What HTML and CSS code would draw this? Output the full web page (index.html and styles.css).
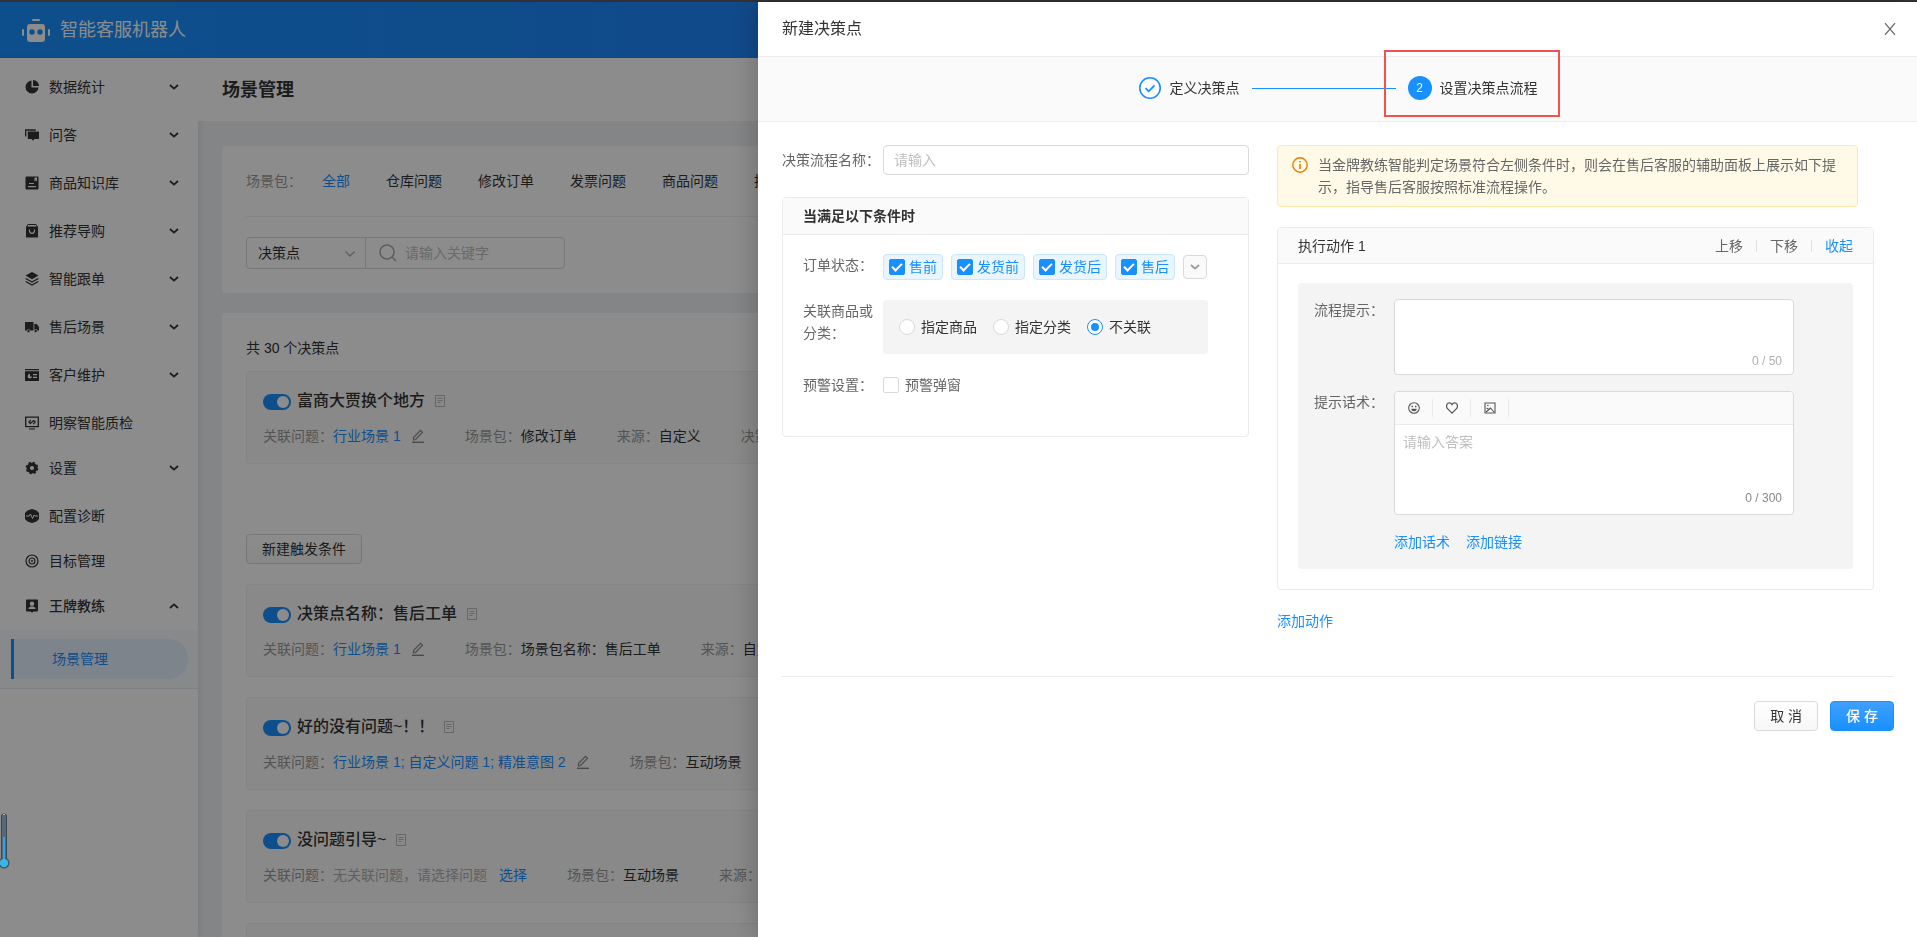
FILE: index.html
```html
<!DOCTYPE html>
<html lang="zh-CN">
<head>
<meta charset="utf-8">
<title>智能客服机器人</title>
<link rel="stylesheet" href="styles.css">
</head>
<body>
<svg class="sprite" aria-hidden="true">
  <symbol id="chevron" viewBox="0 0 10 6"><path d="M1 1l4 3.6L9 1" fill="none" stroke="currentColor" stroke-width="1.8"/></symbol>
  <symbol id="doc" viewBox="0 0 10 12"><path d="M.5.5h9v11h-9z" fill="none" stroke="currentColor"/><path d="M2.5 3.5h5M2.5 5.5h5M2.5 7.5h3" stroke="currentColor"/></symbol>
  <symbol id="pencil" viewBox="0 0 12 14"><path d="M1.5 11V8.600L8.500 1.300l2 1.900L3.600 10.500 1.500 11z" fill="none" stroke="currentColor" stroke-width="1.2"/><path d="M0 13.300h12" stroke="currentColor" stroke-width="1.400"/></symbol>
</svg>

<div class="app">
  <header class="topbar">
    <svg class="logo" viewBox="0 0 28 23" aria-hidden="true"><path fill="#fff" d="M11 0h6a1 1 0 010 2h-6a1 1 0 010-2zM8 5h12a3 3 0 013 3v12a3 3 0 01-3 3H8a3 3 0 01-3-3V8a3 3 0 013-3zM1 10a1 1 0 011 1v5a1 1 0 01-2 0v-5a1 1 0 011-1zM27 10a1 1 0 011 1v5a1 1 0 01-2 0v-5a1 1 0 011-1z"/><circle cx="10" cy="13" r="2.700" fill="#1890ff"/><circle cx="18" cy="13" r="2.700" fill="#1890ff"/></svg>
    <span class="brand">智能客服机器人</span>
  </header>

  <div class="workspace">
    <nav class="sidebar" aria-label="主菜单">
      <button type="button" class="menu-item"><svg class="menu-icon" viewBox="0 0 14 14"><path fill="currentColor" d="M6.500.500v7h7A6.500 6.500 0 116.500.500z"/><path fill="currentColor" d="M8 0a6 6 0 016 6H8z"/></svg><span>数据统计</span><svg class="menu-arrow"><use href="#chevron"/></svg></button>
      <button type="button" class="menu-item"><svg class="menu-icon" viewBox="0 0 14 14"><path d="M.700 8.500V2h10" fill="none" stroke="currentColor" stroke-width="1.300"/><path fill="currentColor" d="M2.800 3.500H14v7.500h-4.500l-1.500 1.800L6.500 11H2.800z"/></svg><span>问答</span><svg class="menu-arrow"><use href="#chevron"/></svg></button>
      <button type="button" class="menu-item"><svg class="menu-icon" viewBox="0 0 14 14"><path fill="currentColor" fill-rule="evenodd" d="M1.500.500h11a1 1 0 011 1v11a1 1 0 01-1 1h-11a1 1 0 01-1-1v-11a1 1 0 011-1zM9.500 1.500v4L11 4.300l1 1.200v-4zM4 7v1h5V7zM3 10v1.200h8V10z"/></svg><span>商品知识库</span><svg class="menu-arrow"><use href="#chevron"/></svg></button>
      <button type="button" class="menu-item"><svg class="menu-icon" viewBox="0 0 14 14"><path d="M3 .500h8l1.500 2.500h-11z" fill="none" stroke="currentColor"/><path fill="currentColor" d="M1 3h12v10.500H1z"/><path d="M4.500 5.500v1.300a2.500 2.500 0 005 0V5.500" fill="none" stroke="#fff" stroke-width="1.200"/></svg><span>推荐导购</span><svg class="menu-arrow"><use href="#chevron"/></svg></button>
      <button type="button" class="menu-item"><svg class="menu-icon" viewBox="0 0 14 14"><path fill="currentColor" d="M7 0l6.500 3.600L7 7.200.500 3.600z"/><path d="M.700 6.500L7 10l6.300-3.500M.700 9.500L7 13l6.300-3.500" fill="none" stroke="currentColor" stroke-width="1.300"/></svg><span>智能跟单</span><svg class="menu-arrow"><use href="#chevron"/></svg></button>
      <button type="button" class="menu-item"><svg class="menu-icon" viewBox="0 0 14 14"><path fill="currentColor" d="M0 2h8.500v8.500H0zM9.300 4h2.500L14 7v3.500H9.300z"/><circle cx="3.500" cy="11" r="1.600" fill="currentColor" stroke="#fff" stroke-width=".700"/><circle cx="10.800" cy="11" r="1.600" fill="currentColor" stroke="#fff" stroke-width=".700"/></svg><span>售后场景</span><svg class="menu-arrow"><use href="#chevron"/></svg></button>
      <button type="button" class="menu-item"><svg class="menu-icon" viewBox="0 0 14 14"><path fill="currentColor" fill-rule="evenodd" d="M0 1h14v1.300H0zM0 3.300h14V13H0zM5 6a2.200 2.200 0 102 2.500H5zM8 6v1.200h4V6zM8 8.700v1.200h4V8.700z"/></svg><span>客户维护</span><svg class="menu-arrow"><use href="#chevron"/></svg></button>
      <a href="#" class="menu-item leaf"><svg class="menu-icon" viewBox="0 0 14 14"><path d="M.700 1.200h12.600v9.500H.700z" fill="none" stroke="currentColor" stroke-width="1.300"/><path d="M4 13h6M5.800 4L3.800 6l1.500 1.500M8.200 8l2-2-1.500-1.500M5.300 7.500l3.400-3" fill="none" stroke="currentColor" stroke-width="1.100"/></svg><span>明察智能质检</span></a>
      <button type="button" class="menu-item"><svg class="menu-icon" viewBox="0 0 14 14"><circle cx="7" cy="7" r="3.700" fill="none" stroke="currentColor" stroke-width="3.200"/><circle cx="7" cy="7" r="5.500" fill="none" stroke="currentColor" stroke-width="1.600" stroke-dasharray="2.500 1.820"/></svg><span>设置</span><svg class="menu-arrow"><use href="#chevron"/></svg></button>
      <a href="#" class="menu-item leaf"><svg class="menu-icon" viewBox="0 0 14 14"><path fill="currentColor" d="M7 0l4.500 1.500L14 4v6l-2.500 2.500L7 14l-4.500-1.500L0 10V4l2.500-2.500z"/><path d="M1 7h3l1.500-2 2 4.500L9 6l1 1h3" fill="none" stroke="#fff"/></svg><span>配置诊断</span></a>
      <a href="#" class="menu-item leaf"><svg class="menu-icon" viewBox="0 0 14 14"><g fill="none" stroke="currentColor" stroke-width="1.200"><circle cx="7" cy="7" r="6"/><circle cx="7" cy="7" r="3"/></g><circle cx="7" cy="7" r="1" fill="currentColor"/></svg><span>目标管理</span></a>
      <button type="button" class="menu-item open" aria-expanded="true"><svg class="menu-icon" viewBox="0 0 14 14"><path fill="currentColor" fill-rule="evenodd" d="M2 .500h10a1 1 0 011 1v10a1 1 0 01-1 1H8.500L7 13.800 5.500 12.500H2a1 1 0 01-1-1v-10a1 1 0 011-1zM7 2.500a2.200 2.200 0 100 4.400 2.200 2.200 0 000-4.400zM3.500 9v1h7V9L8.500 7.500h-3z"/></svg><span>王牌教练</span><svg class="menu-arrow"><use href="#chevron"/></svg></button>
      <div class="submenu"><a href="#" class="submenu-item" aria-current="page">场景管理</a></div>
    </nav>

    <main class="main">
      <div class="page-head"><h1 class="page-title">场景管理</h1></div>
      <section class="card filter-card">
        <div class="tabs">
          <span class="muted">场景包：</span>
          <div class="tab-list">
            <a href="#" class="tab active">全部</a><a href="#" class="tab">仓库问题</a><a href="#" class="tab">修改订单</a><a href="#" class="tab">发票问题</a><a href="#" class="tab">商品问题</a><a href="#" class="tab">推荐问题</a>
          </div>
        </div>
        <div class="search">
          <div class="search-type">
            <select aria-label="搜索类型"><option>决策点</option></select>
            <svg class="select-arrow" viewBox="0 0 10 6"><path d="M.500.500L5 5 9.500.500" fill="none" stroke="currentColor" stroke-width="1.300"/></svg>
          </div>
          <label class="search-box">
            <svg class="search-icon" viewBox="0 0 18 18"><circle cx="8" cy="8" r="7" fill="none" stroke="currentColor" stroke-width="1.600"/><path d="M13 13l4 4" stroke="currentColor" stroke-width="1.600"/></svg>
            <input type="text" placeholder="请输入关键字" aria-label="关键字">
          </label>
        </div>
      </section>

      <section class="card list-card">
        <p class="total">共 30 个决策点</p>
        <article class="point">
          <div class="point-head"><input type="checkbox" role="switch" class="switch" aria-label="启用" checked><h2 class="point-title">富商大贾换个地方</h2><svg class="doc"><use href="#doc"/></svg></div>
          <div class="point-meta">
            <div class="meta"><span class="muted">关联问题：</span><a href="#">行业场景 1</a><svg class="pencil"><use href="#pencil"/></svg></div>
            <div class="meta"><span class="muted">场景包：</span>修改订单</div>
            <div class="meta"><span class="muted">来源：</span>自定义</div>
            <div class="meta"><span class="muted">决策流程：</span>1</div>
          </div>
        </article>
        <button type="button" class="btn trigger">新建触发条件</button>
        <article class="point">
          <div class="point-head"><input type="checkbox" role="switch" class="switch" aria-label="启用" checked><h2 class="point-title">决策点名称：售后工单</h2><svg class="doc"><use href="#doc"/></svg></div>
          <div class="point-meta">
            <div class="meta"><span class="muted">关联问题：</span><a href="#">行业场景 1</a><svg class="pencil"><use href="#pencil"/></svg></div>
            <div class="meta"><span class="muted">场景包：</span>场景包名称：售后工单</div>
            <div class="meta"><span class="muted">来源：</span>自定义</div>
          </div>
        </article>
        <article class="point">
          <div class="point-head"><input type="checkbox" role="switch" class="switch" aria-label="启用" checked><h2 class="point-title">好的没有问题~！！</h2><svg class="doc"><use href="#doc"/></svg></div>
          <div class="point-meta">
            <div class="meta"><span class="muted">关联问题：</span><a href="#">行业场景 1; 自定义问题 1; 精准意图 2</a><svg class="pencil"><use href="#pencil"/></svg></div>
            <div class="meta"><span class="muted">场景包：</span>互动场景</div>
          </div>
        </article>
        <article class="point">
          <div class="point-head"><input type="checkbox" role="switch" class="switch" aria-label="启用" checked><h2 class="point-title">没问题引导~</h2><svg class="doc"><use href="#doc"/></svg></div>
          <div class="point-meta">
            <div class="meta"><span class="muted">关联问题：</span><span class="hint">无关联问题，请选择问题</span><a href="#" class="pick">选择</a></div>
            <div class="meta"><span class="muted">场景包：</span>互动场景</div>
            <div class="meta"><span class="muted">来源：</span>自定义</div>
          </div>
        </article>
        <article class="point"></article>
      </section>
    </main>
  </div>
</div>

<div class="mask"></div>
<svg class="thermometer" viewBox="0 0 10 56" aria-hidden="true"><rect x="1.500" y="1" width="5" height="48" rx="2" fill="#56697a" stroke="#3e4a55"/><circle cx="4" cy="50" r="5.500" fill="#43525f"/><path d="M4 24v24" stroke="#2fa5e8" stroke-width="2"/><circle cx="4" cy="50" r="4.200" fill="#38b6e8"/><path d="M3 1.500h2" stroke="#a9b4bd"/></svg>

<aside class="drawer" role="dialog" aria-label="新建决策点">
  <header class="drawer-head">
    <h2 class="drawer-title">新建决策点</h2>
    <button type="button" class="close" aria-label="关闭"><svg viewBox="0 0 12 12"><path d="M1 .200l10 11.600M11 .200L1 11.800" stroke="currentColor" stroke-width="1.300"/></svg></button>
  </header>
  <ol class="steps">
    <li class="step"><svg class="step-dot" viewBox="0 0 24 24"><circle cx="12" cy="12" r="10.200" fill="#fff" stroke="#1890ff" stroke-width="1.600"/><path d="M7.500 12.200l3.200 3.100 5.800-6" fill="none" stroke="#1890ff" stroke-width="1.800"/></svg>定义决策点</li>
    <li class="step-line" aria-hidden="true"></li>
    <li class="step current" aria-current="step"><span class="step-dot filled">2</span>设置决策点流程</li>
  </ol>

  <form class="drawer-body">
    <div class="columns">
      <div class="left">
        <div class="name-row">
          <label for="flow-name">决策流程名称：</label>
          <input id="flow-name" class="text-input" type="text" placeholder="请输入">
        </div>
        <section class="panel">
          <h3 class="panel-head strong">当满足以下条件时</h3>
          <div class="conditions">
            <div class="cond">
              <span class="cond-label">订单状态：</span>
              <div class="tags">
                <label class="tag"><input type="checkbox" class="check" checked>售前</label>
                <label class="tag"><input type="checkbox" class="check" checked>发货前</label>
                <label class="tag"><input type="checkbox" class="check" checked>发货后</label>
                <label class="tag"><input type="checkbox" class="check" checked>售后</label>
                <button type="button" class="more" aria-label="展开"><svg><use href="#chevron"/></svg></button>
              </div>
            </div>
            <div class="cond">
              <span class="cond-label">关联商品或分类：</span>
              <div class="radios">
                <label class="option"><input type="radio" name="link" class="radio">指定商品</label>
                <label class="option"><input type="radio" name="link" class="radio">指定分类</label>
                <label class="option"><input type="radio" name="link" class="radio" checked>不关联</label>
              </div>
            </div>
            <div class="cond last">
              <span class="cond-label">预警设置：</span>
              <label class="option quiet"><input type="checkbox" class="check">预警弹窗</label>
            </div>
          </div>
        </section>
      </div>

      <div class="right">
        <div class="alert"><svg viewBox="0 0 16 16"><circle cx="8" cy="8" r="7.200" fill="none" stroke="#ed7b00" stroke-width="1.400"/><path d="M8 7v5M8 4v1.600" stroke="#ed7b00" stroke-width="1.600"/></svg><p>当金牌教练智能判定场景符合左侧条件时，则会在售后客服的辅助面板上展示如下提示，指导售后客服按照标准流程操作。</p></div>
        <section class="panel">
          <div class="panel-head">
            <h3 class="panel-title">执行动作 1</h3>
            <div class="ops"><button type="button" class="op">上移</button><button type="button" class="op">下移</button><button type="button" class="op primary">收起</button></div>
          </div>
          <div class="action">
            <div class="action-row">
              <label for="tip">流程提示：</label>
              <div class="area">
                <textarea id="tip"></textarea>
                <span class="count light">0 / 50</span>
              </div>
            </div>
            <div class="action-row">
              <label for="script">提示话术：</label>
              <div class="area editor">
                <div class="toolbar">
                  <button type="button" class="tool" aria-label="表情"><svg viewBox="0 0 12 12"><circle cx="6" cy="6" r="5.300" fill="none" stroke="currentColor" stroke-width="1.100"/><path d="M3.500 3.800h1.500v1.400H3.500zM7 3.800h1.500v1.400H7zM3.300 6.800h5.400a2.700 2.500 0 01-5.400 0z" fill="currentColor"/></svg></button>
                  <button type="button" class="tool" aria-label="收藏"><svg viewBox="0 0 12 12"><path d="M6 11.200L1.300 6.500C-.500 3.500 1.300 .800 3.500 .800 5 .800 6 2.600 6 2.600S7 .800 8.500 .800c2.200 0 4 2.700 2.200 5.700z" fill="none" stroke="currentColor" stroke-width="1.200"/></svg></button>
                  <button type="button" class="tool" aria-label="图片"><svg viewBox="0 0 12 12"><path d="M1 1h10v10H1z" fill="none" stroke="currentColor" stroke-width="1.100"/><path d="M3 3.500h1.500M2 10l3-2.500L6.500 6l4 4.500M5 7.500L2.500 6" fill="none" stroke="currentColor" stroke-width="1.100"/></svg></button>
                </div>
                <textarea id="script" placeholder="请输入答案"></textarea>
                <span class="count">0 / 300</span>
              </div>
            </div>
            <div class="action-links"><a href="#">添加话术</a><a href="#">添加链接</a></div>
          </div>
        </section>
        <a href="#" class="add-action">添加动作</a>
      </div>
    </div>
    <footer class="drawer-foot">
      <button type="button" class="btn">取 消</button>
      <button type="submit" class="btn save">保 存</button>
    </footer>
  </form>
</aside>
<div class="highlight" aria-hidden="true"></div>
</body>
</html>
```
FILE: styles.css
```css
* { box-sizing: border-box; }

body {
  margin: 0;
  height: 100vh;
  overflow: hidden;
  border-top: 2px solid #323236;
  font: 14px/22px "Liberation Sans", "Noto Sans CJK SC", sans-serif;
  color: #333;
  background: #f0f2f5;
}

h1, h2, h3, p, ol { margin: 0; padding: 0; font-size: 14px; font-weight: 400; }
a { color: #1890ff; text-decoration: none; }
svg { display: block; flex: none; }
button, input, select, textarea { font: inherit; color: inherit; margin: 0; }
button { padding: 0; border: 0; background: none; }
::placeholder { color: #bfbfbf; opacity: 1; }
.sprite { display: none; }

/* ---------- page behind the drawer ---------- */
.app { height: 100%; display: flex; flex-direction: column; overflow: hidden; }

.topbar {
  flex: none;
  height: 56px;
  padding: 0 22px;
  display: flex;
  align-items: center;
  gap: 10px;
  background: linear-gradient(90deg, #1890ff, #2a79f5);
  color: #fff;
}
.logo { width: 28px; height: 23px; }
.brand { font-size: 18px; }

.workspace { flex: 1; min-height: 0; display: flex; }

.sidebar { width: 198px; flex: none; padding-top: 5px; background: #fff; box-shadow: 2px 0 6px rgba(0, 21, 41, .06); }
.menu-item {
  display: flex;
  align-items: center;
  gap: 10px;
  width: 100%;
  height: 48px;
  padding: 0 19px 0 25px;
  color: #333;
  text-align: left;
}
.menu-item.leaf { height: 45px; padding-top: 3px; }
.menu-item.open { font-weight: 500; }
.menu-icon { width: 14px; height: 14px; }
.menu-arrow { width: 10px; height: 6px; margin-left: auto; }
.menu-item.open .menu-arrow { transform: rotate(180deg); }
.submenu { padding: 9px 10px 9px 11px; background: #f7f9fc; border-bottom: 1px solid #e4eaf2; }
.submenu-item {
  display: block;
  padding-left: 38px;
  border-left: 3px solid #1890ff;
  border-radius: 0 20px 20px 0;
  background: #e3f0fd;
  line-height: 40px;
}

.main { flex: 1; min-width: 0; overflow: hidden; }
.page-head { height: 63px; padding: 0 24px; display: flex; align-items: center; background: #fff; }
.page-title { font-size: 18px; font-weight: 700; line-height: 26px; }

.card { margin: 0 24px 20px; padding: 0 24px; background: #fff; border-radius: 4px; }
.filter-card { margin-top: 25px; padding-bottom: 24px; }
.tabs { display: flex; gap: 20px; padding: 24px 0; border-bottom: 1px solid #f0f0f0; }
.tab-list { display: flex; gap: 36px; white-space: nowrap; }
.tab { color: #333; }
.tab.active { color: #1890ff; }
.muted { color: #999; }

.search { display: flex; width: 319px; height: 32px; margin-top: 20px; border: 1px solid #d9d9d9; border-radius: 4px; }
.search-type { position: relative; width: 119px; border-right: 1px solid #d9d9d9; }
.search-type select { width: 100%; height: 30px; padding: 0 11px; border: 0; background: none; appearance: none; }
.select-arrow { position: absolute; right: 10px; top: 13px; width: 10px; height: 6px; color: #aaa; pointer-events: none; }
.search-box { flex: 1; min-width: 0; display: flex; align-items: center; gap: 8px; padding: 0 13px; color: #aaa; }
.search-icon { width: 18px; height: 18px; }
.search-box input { flex: 1; min-width: 0; height: 30px; padding: 0; border: 0; background: none; }

.list-card { padding-top: 24px; padding-bottom: 24px; }
.total { margin-bottom: 12px; }
.point { height: 93px; margin-bottom: 20px; padding: 16px; border: 1px solid #f0f0f0; border-radius: 4px; background: #fafafa; }
.point-head { display: flex; align-items: center; gap: 6px; height: 26px; }
.point-title { font-size: 16px; font-weight: 500; line-height: 24px; }
.doc { width: 10px; height: 12px; margin-left: 4px; color: #bbb; }
.point-meta { display: flex; gap: 40px; margin-top: 11px; white-space: nowrap; }
.meta { display: flex; flex: none; align-items: center; }
.pencil { width: 14px; height: 14px; margin-left: 10px; color: #888; }
.hint { color: #b0b0b0; }
.pick { margin-left: 12px; }

.switch {
  appearance: none;
  width: 28px;
  height: 16px;
  margin-top: 2px;
  padding: 2px;
  border-radius: 8px;
  background: #1890ff;
}
.switch::before { content: ""; display: block; width: 12px; height: 12px; margin-left: auto; border-radius: 50%; background: #fff; }

.btn {
  height: 30px;
  padding: 0 15px;
  border: 1px solid #d9d9d9;
  border-radius: 4px;
  background: linear-gradient(#fff, #f7f7f7);
  color: #333;
}
.btn.save { border-color: #1890ff; background: linear-gradient(#40a0ff, #1890ff); color: #fff; font-weight: 500; }
.trigger { display: block; margin: 70px 0 20px; }

.mask { position: fixed; inset: 2px 0 0; background: rgba(0, 0, 0, .45); }
.thermometer { position: fixed; left: 0; top: 813px; width: 10px; height: 56px; }

/* ---------- drawer ---------- */
.drawer {
  position: fixed;
  top: 2px;
  right: 0;
  bottom: 0;
  width: calc(100% - 758px);
  overflow: auto;
  background: #fff;
  box-shadow: -4px 0 24px rgba(0, 0, 0, .2);
}
.drawer-head { display: flex; align-items: center; justify-content: space-between; height: 55px; padding: 0 21px 0 24px; border-bottom: 1px solid #ebebeb; }
.drawer-title { font-size: 16px; line-height: 24px; }
.close { color: #666; }
.close svg { width: 12px; height: 12px; }

.steps { display: flex; align-items: center; justify-content: center; gap: 12px; height: 65px; padding-bottom: 2px; border-bottom: 1px solid #ebebeb; background: #fafafa; list-style: none; }
.step { display: flex; align-items: center; gap: 8px; }
.step-dot { width: 24px; height: 24px; }
.step-dot.filled { border-radius: 50%; background: #1890ff; color: #fff; font-size: 12px; line-height: 24px; text-align: center; }
.step-line { width: 144px; height: 1px; background: #1890ff; }
.highlight { position: fixed; left: 1384px; top: 50px; width: 176px; height: 67px; border: 2px solid #f5504e; pointer-events: none; }

.drawer-body { padding: 23px 23px 24px 24px; }
.columns { display: grid; grid-template-columns: 42% 1fr; gap: 28px; padding-bottom: 44px; border-bottom: 1px solid #ebebeb; }
.right { padding-right: 20px; }

.name-row { display: flex; align-items: center; gap: 3px; margin-bottom: 22px; color: #666; }
.text-input { flex: 1; min-width: 0; height: 30px; padding: 0 10px; border: 1px solid #d9d9d9; border-radius: 4px; background: #fff; }

.panel { border: 1px solid #ebebeb; border-radius: 4px; }
.panel-head { display: flex; align-items: center; justify-content: space-between; height: 36px; padding: 0 20px; border-bottom: 1px solid #ebebeb; background: #fafafa; }
.panel-head.strong { height: 37px; font-weight: 700; }

.conditions { padding: 19px 40px 40px 20px; color: #666; }
.cond { display: flex; margin-bottom: 20px; }
.cond.last { align-items: center; margin-bottom: 0; }
.cond-label { width: 80px; flex: none; }
.tags { display: flex; align-items: center; gap: 8px; }
.tag { display: flex; align-items: center; gap: 4px; height: 26px; padding: 0 5px; border: 1px solid #cbe6ff; border-radius: 4px; background: #e9f5ff; color: #1890ff; white-space: nowrap; }
.more { width: 24px; height: 24px; display: flex; align-items: center; justify-content: center; border: 1px solid #d9d9d9; border-radius: 4px; background: #fafafa; color: #999; }
.more svg { width: 10px; height: 6px; }
.radios { flex: 1; display: flex; align-items: center; gap: 16px; height: 54px; padding: 0 16px; border-radius: 4px; background: #f4f4f4; color: #333; white-space: nowrap; }
.option { display: flex; align-items: center; gap: 6px; }

.check { appearance: none; width: 16px; height: 16px; flex: none; border: 1px solid #d9d9d9; border-radius: 2px; background: #fff; }
.check:checked { display: flex; justify-content: center; align-items: flex-start; border-color: #1890ff; background: #1890ff; }
.check:checked::before { content: ""; box-sizing: border-box; flex: none; width: 10px; height: 6px; margin-top: 3px; border: solid #fff; border-width: 0 0 2px 2px; transform: rotate(-45deg); }
.radio { appearance: none; width: 16px; height: 16px; flex: none; padding: 3px; border: 1px solid #d9d9d9; border-radius: 50%; background: #fff; }
.radio:checked { border-color: #1890ff; }
.radio:checked::before { content: ""; display: block; width: 8px; height: 8px; border-radius: 50%; background: #1890ff; }

.alert { display: flex; gap: 10px; margin: 0 16px 20px 0; padding: 8px 14px; border: 1px solid #ffe9a8; border-radius: 4px; background: #fffae8; color: #666; }
.alert svg { width: 16px; height: 16px; margin-top: 3px; }

.ops { display: flex; align-items: center; }
.op { color: #666; }
.op.primary { color: #1890ff; }
.op + .op { display: flex; align-items: center; }
.op + .op::before { content: ""; width: 1px; height: 12px; margin: 0 13px; background: #e0e0e0; }

.action { margin: 19px 20px 20px; padding: 16px; border-radius: 4px; background: #f4f4f4; color: #666; }
.action-row { display: grid; grid-template-columns: 80px 1fr; margin-bottom: 16px; }
.action-row, .action-links { padding-right: 43px; }
.area { position: relative; height: 76px; border: 1px solid #d9d9d9; border-radius: 4px; background: #fff; overflow: hidden; }
.area.editor { height: 124px; }
.area textarea { display: block; width: 100%; height: 74px; padding: 4px 8px; border: 0; outline: 0; background: none; resize: none; }
.count { position: absolute; right: 11px; bottom: 2px; font-size: 12px; color: #888; }
.area.editor .count { bottom: 5px; }
.count.light { color: #b0b0b0; }
.toolbar { display: flex; align-items: center; height: 33px; border-bottom: 1px solid #ebebeb; background: #fafafa; }
.tool { display: flex; align-items: center; justify-content: center; width: 38px; height: 18px; border-right: 1px solid #ebebeb; color: #555; }
.tool svg { width: 12px; height: 12px; }
.editor textarea { padding-top: 6px; }
.action-links { display: flex; gap: 16px; padding-left: 80px; }
.add-action { display: inline-block; margin-top: 20px; }

.drawer-foot { display: flex; justify-content: flex-end; gap: 12px; padding-top: 24px; }
```
